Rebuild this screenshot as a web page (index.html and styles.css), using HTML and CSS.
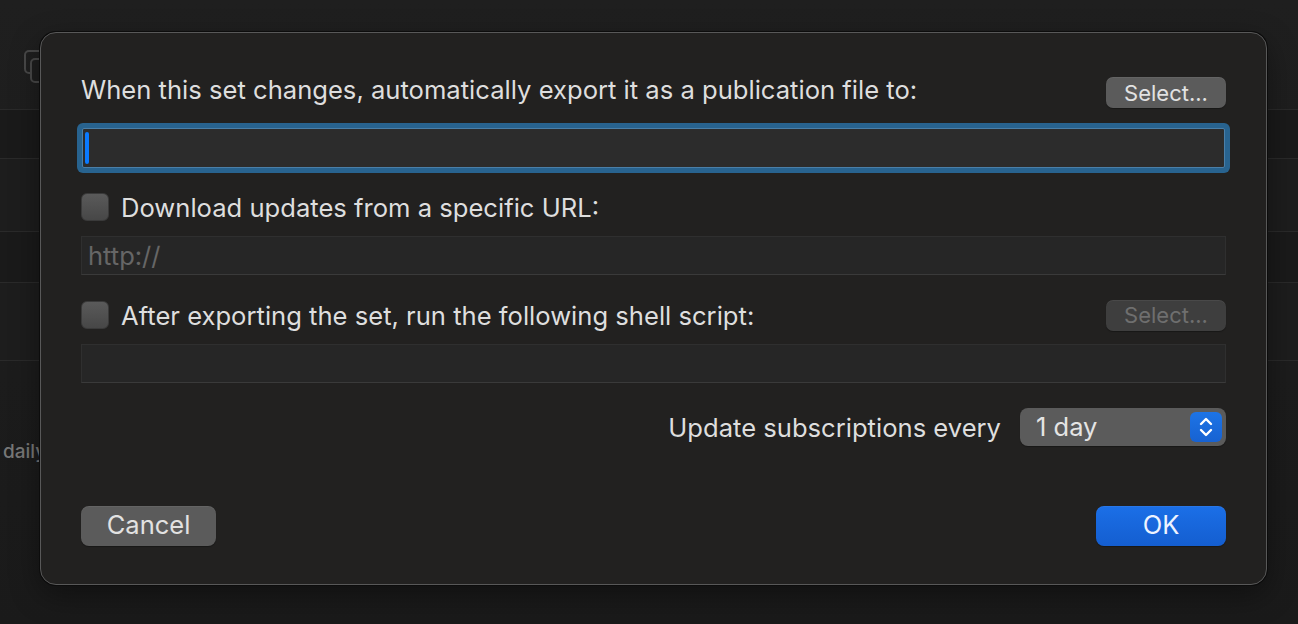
FILE: index.html
```html
<!DOCTYPE html>
<html lang="en">
<head>
  <meta charset="UTF-8">
  <title>Publication Options</title>
  <link rel="stylesheet" href="styles.css">
</head>
<body>
  <div class="window">
    <div class="toolbar">
      <svg class="toolbar-icon" width="30" height="34" viewBox="0 0 30 34">
        <rect x="1" y="1" width="20" height="22" rx="4" fill="none" stroke="#484848" stroke-width="2"/>
        <rect x="7" y="9" width="20" height="23" rx="4" fill="#1e1e1e" stroke="#484848" stroke-width="2"/>
      </svg>
    </div>
    <div class="rows">
      <div class="row row-a"></div>
      <div class="row row-b"></div>
      <div class="row row-a short"></div>
      <div class="row row-b tall"></div>
    </div>
    <div class="schedule">daily</div>
  </div>

  <div class="dialog">
    <div class="line">
      <span class="label">When this set changes, automatically export it as a publication file to:</span>
      <button class="btn small">Select...</button>
    </div>
    <div class="field focused"><span class="caret"></span></div>

    <div class="line check-line first-check">
      <span class="checkbox"></span>
      <span class="label">Download updates from a specific URL:</span>
    </div>
    <div class="field plain"><span class="placeholder">http://</span></div>

    <div class="line check-line second-check">
      <span class="checkbox"></span>
      <span class="label">After exporting the set, run the following shell script:</span>
      <button class="btn small disabled">Select...</button>
    </div>
    <div class="field plain"></div>

    <div class="update-line">
      <span class="label">Update subscriptions every</span>
      <div class="popup">
        <span>1 day</span>
        <span class="stepper">
          <svg width="18" height="24" viewBox="0 0 18 24">
            <path d="M4 9 L9 4 L14 9" fill="none" stroke="#fff" stroke-width="2.4" stroke-linecap="round" stroke-linejoin="round"/>
            <path d="M4 15 L9 20 L14 15" fill="none" stroke="#fff" stroke-width="2.4" stroke-linecap="round" stroke-linejoin="round"/>
          </svg>
        </span>
      </div>
    </div>

    <div class="footer">
      <button class="btn big">Cancel</button>
      <button class="btn big primary">OK</button>
    </div>
  </div>
</body>
</html>
```

FILE: styles.css
```css
body {
  margin: 0;
  width: 1298px;
  height: 624px;
  overflow: hidden;
  position: relative;
  font-family: 'Inter', 'Liberation Sans', sans-serif;
  background: linear-gradient(180deg, #1f1f1f, #1a1a1a);
  color: #dedede;
}
.window {
  height: 624px;
}
.toolbar {
  height: 110px;
  padding: 50px 0 0 24px;
  box-sizing: border-box;
  border-bottom: 1px solid #2a2a2a;
}
.toolbar-icon {
  display: block;
}
.row {
  height: 48px;
  border-bottom: 1px solid #2a2a2a;
}
.row-a {
  background: #1a1a1a;
}
.row-b {
  height: 72px;
  background: #1d1d1d;
}
.row.short {
  height: 50px;
}
.row.tall {
  height: 77px;
}
.schedule {
  padding: 79px 0 0 3px;
  font-size: 19px;
  font-weight: 500;
  color: #777;
}

.dialog {
  position: absolute;
  left: 40px;
  top: 32px;
  width: 1227px;
  height: 553px;
  box-sizing: border-box;
  padding: 0 40px;
  background: #222120;
  border: 1px solid #585858;
  border-radius: 16px;
  box-shadow: 0 0 0 1px #0c0c0c, 0 10px 30px rgba(0, 0, 0, 0.4);
  display: flex;
  flex-direction: column;
}
.label {
  font-size: 25.6px;
  color: #dedede;
  white-space: nowrap;
}
.line {
  display: flex;
  align-items: center;
  justify-content: space-between;
  margin-top: 44px;
  height: 31px;
}
.line .label {
  margin-top: -6px;
}
.btn {
  font-family: inherit;
  border: none;
  color: #e2e2e2;
  background: #5b5b5b;
  box-shadow: 0 1px 1px rgba(0, 0, 0, 0.3), inset 0 1px 0 rgba(255, 255, 255, 0.06);
  cursor: pointer;
}
.btn.small {
  width: 120px;
  height: 31px;
  border-radius: 7px;
  font-size: 22px;
  padding: 0;
}
.btn.disabled {
  background: #3e3e3e;
  color: #6f6f6f;
}
.btn.big {
  height: 40px;
  border-radius: 8px;
  font-size: 25.5px;
  padding: 0 0 3px;
}
.field {
  height: 39px;
  box-sizing: border-box;
  background: #262626;
  border: 1px solid #2f2f2f;
  border-bottom-color: #3a3a3a;
  display: flex;
  align-items: center;
  padding-left: 6px;
}
.field.focused {
  margin: 20px 1px 0;
  height: 40px;
  background: #2c2c2c;
  border: 1px solid #4a7fa8;
  box-shadow: 0 0 0 5px #28638f;
  border-radius: 2px;
  padding-left: 2px;
}
.caret {
  width: 4px;
  height: 32px;
  border-radius: 2px;
  background: #0a7aff;
}
.placeholder {
  font-size: 25.5px;
  color: #666;
}
.check-line {
  justify-content: flex-start;
  height: 30px;
}
.first-check {
  margin-top: 24px;
}
.second-check {
  margin-top: 25px;
}
.check-line .label {
  margin-top: 0;
  margin-left: 12px;
}
.check-line .btn {
  margin-left: auto;
}
.checkbox {
  width: 28px;
  height: 28px;
  box-sizing: border-box;
  border-radius: 6px;
  background: linear-gradient(180deg, #5a5a5a, #474747);
  border: 1px solid #3a3a3a;
}
.first-check + .field,
.second-check + .field {
  margin-top: 14px;
}
.update-line {
  display: flex;
  justify-content: flex-end;
  align-items: center;
  gap: 19px;
  margin-top: 25px;
  height: 38px;
}
.popup {
  width: 206px;
  height: 38px;
  box-sizing: border-box;
  border-radius: 8px;
  background: #5b5b5b;
  box-shadow: 0 1px 1px rgba(0, 0, 0, 0.3);
  display: flex;
  align-items: center;
  justify-content: space-between;
  padding: 0 4px 0 16px;
  font-size: 25.5px;
  color: #e4e4e4;
}
.popup span:first-child {
  margin-top: -2px;
}
.stepper {
  width: 32px;
  height: 30px;
  border-radius: 6px;
  background: linear-gradient(180deg, #1d74e6, #1762d2);
  display: flex;
  align-items: center;
  justify-content: center;
}
.stepper svg {
  display: block;
}
.footer {
  display: flex;
  justify-content: space-between;
  margin-top: 60px;
}
.footer .btn {
  width: 135px;
}
.footer .primary {
  width: 130px;
  background: linear-gradient(180deg, #1b6fe7, #145ed0);
  color: #eef3ff;
}
```
